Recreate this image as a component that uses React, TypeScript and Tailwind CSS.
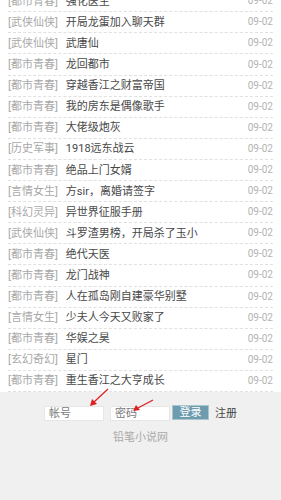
import React from 'react';

const BOOKS: [string, string][] = [
  ['都市青春', '强化医生'],
  ['武侠仙侠', '开局龙蛋加入聊天群'],
  ['武侠仙侠', '武唐仙'],
  ['都市青春', '龙回都市'],
  ['都市青春', '穿越香江之财富帝国'],
  ['都市青春', '我的房东是偶像歌手'],
  ['都市青春', '大佬级炮灰'],
  ['历史军事', '1918远东战云'],
  ['都市青春', '绝品上门女婿'],
  ['言情女生', '方sir，离婚请签字'],
  ['科幻灵异', '异世界征服手册'],
  ['武侠仙侠', '斗罗渣男榜，开局杀了玉小'],
  ['都市青春', '绝代天医'],
  ['都市青春', '龙门战神'],
  ['都市青春', '人在孤岛刚自建豪华别墅'],
  ['言情女生', '少夫人今天又败家了'],
  ['都市青春', '华娱之昊'],
  ['玄幻奇幻', '星门'],
  ['都市青春', '重生香江之大亨成长'],
];

export default function App() {
  return (
    <div className="relative h-[500px] w-[281px] overflow-hidden flex flex-col bg-white font-['Roboto','Noto_Sans_CJK_SC',sans-serif]">
      {/* list, scrolled a little */}
      <div className="px-2 -mt-[8.8px]">
        {BOOKS.map(([cat, title], i) => (
          <div key={i} className="h-[21.1px] flex items-center border-b border-dashed border-[#e0e0e0] text-[11px] leading-none">
            <span className="text-[#a8a8a8]">[{cat}]</span>
            <span className="ml-[8px] text-[#484848]">{title}</span>
            <span className="ml-auto text-[10px] text-[#b3b3b3]">09-02</span>
          </div>
        ))}
      </div>

      {/* login bar */}
      <div className="flex-1 bg-[#f0f0f0] pt-[14px]">
        <div className="flex items-center justify-center">
          <div className="w-[60px] h-[15px] bg-white border border-[#e6e6e6] flex items-center pl-[4px] text-[11px] leading-none text-[#7a7a7a]">帐号</div>
          <div className="ml-[6px] w-[60px] h-[15px] bg-white border border-[#e6e6e6] flex items-center pl-[4px] text-[11px] leading-none text-[#7a7a7a]">密码</div>
          <button className="ml-[2px] -mt-[1px] w-[37px] h-[15px] bg-[#6d9cae] border border-[#a9c6d1] text-white text-[11px] leading-none flex items-center justify-center">登录</button>
          <span className="ml-[6px] text-[11px] leading-none text-[#444]">注册</span>
        </div>
        <div className="mt-[11px] text-center text-[11px] leading-none text-[#aaaaaa]">铅笔小说网</div>
      </div>

      {/* red annotation arrows */}
      <svg className="absolute left-0 top-0 pointer-events-none" width="281" height="500" viewBox="0 0 281 500">
        <line x1="108" y1="389" x2="94" y2="402" stroke="#e01e1e" strokeWidth="1.2" />
        <polygon points="90,406 92,399 97,404" fill="#e01e1e" />
        <line x1="153" y1="400" x2="138" y2="408" stroke="#e01e1e" strokeWidth="1.2" />
        <polygon points="133,411 136,405 140,410" fill="#e01e1e" />
      </svg>
    </div>
  );
}
